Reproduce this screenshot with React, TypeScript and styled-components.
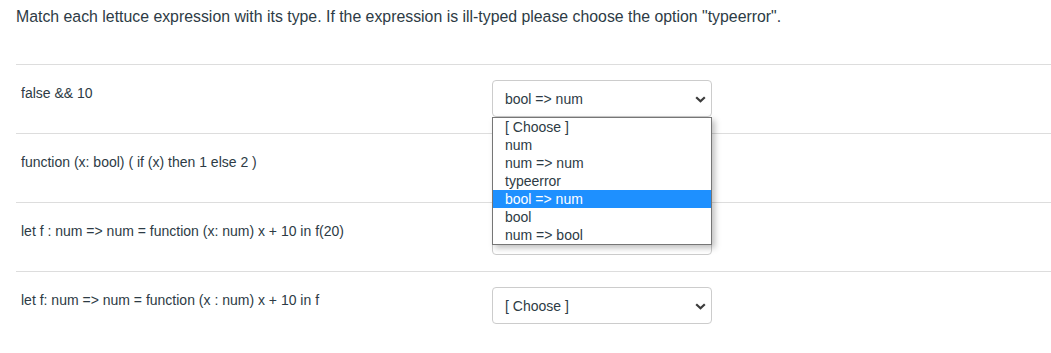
import React from "react";
import styled, { createGlobalStyle } from "styled-components";

const GlobalStyle = createGlobalStyle`
  html, body { margin: 0; padding: 0; background: #fff; }
  body { font-family: "Liberation Sans", Arial, sans-serif; color: #2d3b45; overflow: hidden; }
`;

const Page = styled.div`
  padding-left: 16px;
`;

const Title = styled.p`
  margin: 0;
  padding-top: 5px;
  height: 59px;
  font-size: 15.85px;
  line-height: 24px;
  color: #2d3b45;
  white-space: nowrap;
`;

const Row = styled.div`
  display: flex;
  align-items: flex-start;
  height: 68px;
  border-top: 1px solid #dddddd;
`;

const Expr = styled.div`
  width: 471px;
  padding: 18px 0 0 5px;
  font-size: 14px;
  line-height: 20px;
  color: #2d3b45;
  white-space: nowrap;
`;

const SelectWrap = styled.div`
  position: relative;
  margin-top: 15px;
`;

const SelectBox = styled.div`
  box-sizing: border-box;
  width: 220px;
  height: 37px;
  border: 1px solid #cccccc;
  border-radius: 4px;
  background: #fff;
  display: flex;
  align-items: center;
  justify-content: space-between;
  padding: 0 5px 0 12px;
  font-size: 14px;
  color: #2d3b45;
`;

const Chevron = styled.svg`
  width: 11px;
  height: 7px;
  margin-top: 1px;
`;

const List = styled.ul`
  position: absolute;
  left: 0;
  top: 37px;
  z-index: 10;
  box-sizing: border-box;
  width: 220px;
  margin: 0;
  padding: 0;
  list-style: none;
  background: #fff;
  border: 1px solid #767676;
  box-shadow: 3px 3px 6px rgba(0, 0, 0, 0.25);
`;

const Option = styled.li<{ $active?: boolean }>`
  height: 18px;
  line-height: 18px;
  padding-left: 12px;
  font-size: 14px;
  background: ${(p) => (p.$active ? "#1e90ff" : "transparent")};
  color: ${(p) => (p.$active ? "#ffffff" : "#2d3b45")};
`;

const options = ["[ Choose ]", "num", "num => num", "typeerror", "bool => num", "bool", "num => bool"];

const rows = [
  { expr: "false && 10", value: "bool => num", open: true },
  { expr: "function (x: bool) ( if (x) then 1 else 2 )", value: "", open: false },
  { expr: "let f : num => num = function (x: num) x + 10 in f(20)", value: "", open: false },
  { expr: "let f: num => num = function (x : num) x + 10 in f", value: "[ Choose ]", open: false },
];

const Arrow = () => (
  <Chevron viewBox="0 0 11 7">
    <path d="M1.2 1.2 L5.5 5.3 L9.8 1.2" fill="none" stroke="#3b3b3b" strokeWidth="2.2" />
  </Chevron>
);

export default function App() {
  return (
    <Page>
      <GlobalStyle />
      <Title>
        Match each lettuce expression with its type. If the expression is ill-typed please choose the option "typeerror".
      </Title>
      {rows.map((r, i) => (
        <Row key={i}>
          <Expr>{r.expr}</Expr>
          <SelectWrap>
            <SelectBox>
              <span>{r.value}</span>
              <Arrow />
            </SelectBox>
            {r.open && (
              <List>
                {options.map((o) => (
                  <Option key={o} $active={o === r.value}>
                    {o}
                  </Option>
                ))}
              </List>
            )}
          </SelectWrap>
        </Row>
      ))}
    </Page>
  );
}
